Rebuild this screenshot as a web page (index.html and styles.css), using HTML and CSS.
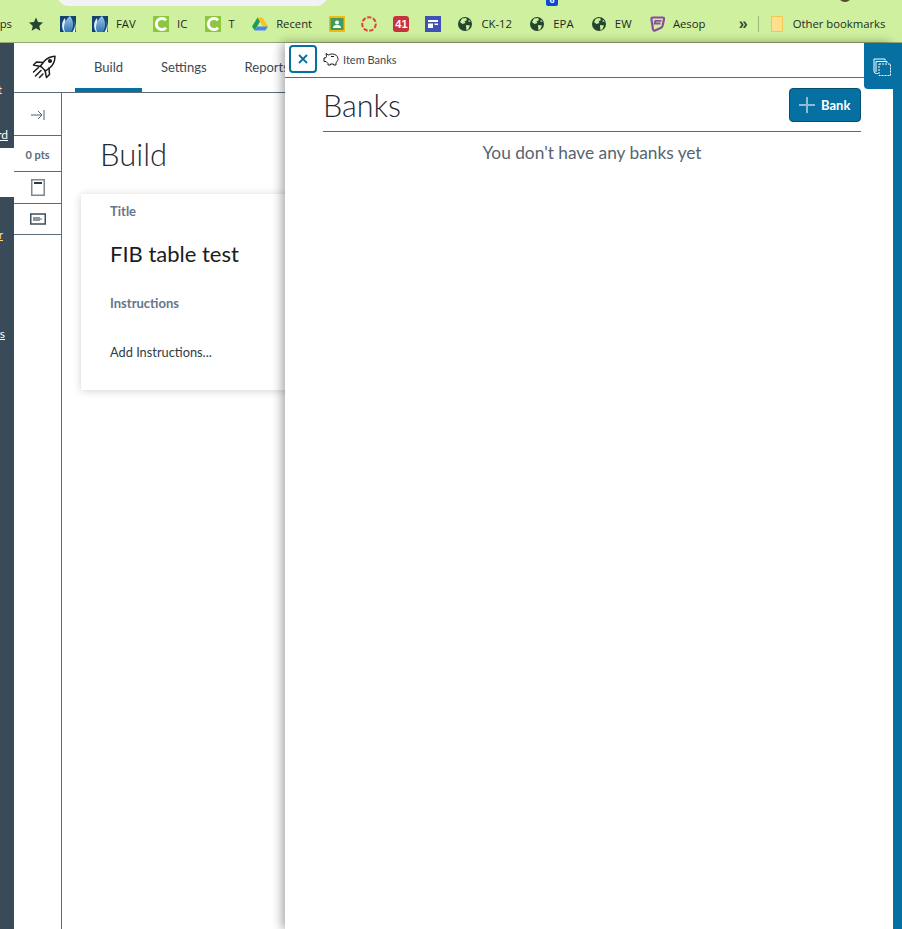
FILE: index.html
```html
<!DOCTYPE html>
<html lang="en">
<head>
<meta charset="utf-8">
<title>Item Banks</title>
<link rel="stylesheet" href="styles.css">
</head>
<body>
<svg class="defs" width="0" height="0" aria-hidden="true">
  <defs>
    <linearGradient id="petal" x1="0" y1="0" x2="0" y2="1"><stop offset="0" stop-color="#9cc8ec"/><stop offset="1" stop-color="#2f75b5"/></linearGradient>
    <symbol id="lotus" viewBox="0 0 16 16">
      <rect width="16" height="16" fill="#0f4470"/>
      <path d="M5 2C1.500 6 1 11 4 16H7Z" fill="#dfeaf4"/>
      <path d="M10 0C14 5 14 11 11 16H5C2.500 10 5 4 10 0Z" fill="url(#petal)"/>
      <path d="M13.500 3C16 8 15 12 12.500 16H15C16 12 16 7 13.500 3Z" fill="#eef4f9"/>
    </symbol>
    <symbol id="canvas-c" viewBox="0 0 16 16">
      <rect width="16" height="16" fill="#8dc63f"/>
      <path d="M13 4.200A5.600 5.600 0 1 0 13 11.800" fill="none" stroke="#fff" stroke-width="3"/>
    </symbol>
    <symbol id="globe" viewBox="0 0 16 16">
      <circle cx="8" cy="8" r="7" fill="#24452f"/>
      <path d="M5 2.500 9 2 10 4 7.500 5.600 8.500 7 5.400 8 3 6ZM9 9l4 .6-1.600 3.600-2 1ZM12 3.500l1.600 2.500-2.200-.5Z" fill="#cfef9e"/>
    </symbol>
  </defs>
</svg>

<div class="chrome-top">
  <span class="omnibox"></span>
  <span class="ext-badge">6</span>
  <span class="avatar"></span>
  <nav class="bookmarks">
    <span class="bm bm-apps">Apps</span>
    <span class="bm"><svg class="ico" viewBox="0 0 16 16"><path d="M8 1.500l2 4.600 5 .5-3.800 3.300 1.200 4.900L8 12.200l-4.400 2.600 1.200-4.900L1 6.600l5-.5Z" fill="#24452f"/></svg></span>
    <span class="bm"><svg class="ico"><use href="#lotus"/></svg></span>
    <span class="bm bm-l"><svg class="ico"><use href="#lotus"/></svg>FAV</span>
    <span class="bm bm-l"><svg class="ico"><use href="#canvas-c"/></svg>IC</span>
    <span class="bm bm-l"><svg class="ico"><use href="#canvas-c"/></svg>T</span>
    <span class="bm bm-l"><svg class="ico" viewBox="0 0 16 16"><path d="M5.500 1.500h5L16 10.500h-5Z" fill="#f7c325"/><path d="M5.500 1.500 0 10.500l2.700 4L8 5.800Z" fill="#1f9d57"/><path d="M2.700 14.500h10.600L16 10.500H5.200Z" fill="#4a86e8"/></svg>Recent</span>
    <span class="bm"><svg class="ico" viewBox="0 0 16 16"><rect width="16" height="16" rx="1" fill="#f5b90f"/><rect x="1.500" y="2" width="13" height="12" fill="#3f9a60"/><circle cx="8" cy="6.500" r="2" fill="#fff"/><path d="M4 12c0-2.400 1.800-3 4-3s4 .6 4 3Z" fill="#fff"/></svg></span>
    <span class="bm"><svg class="ico" viewBox="0 0 16 16"><circle cx="8" cy="8" r="6.800" fill="none" stroke="#e2403a" stroke-width="2" stroke-dasharray="4.300 1.700"/></svg></span>
    <span class="bm"><span class="tile-41">41</span></span>
    <span class="bm"><svg class="ico" viewBox="0 0 16 16"><rect width="16" height="16" fill="#3f51b5"/><path d="M3 4h10v2H3ZM3 7.500h5V12H3ZM9.500 7.500H13V9H9.500Z" fill="#fff"/></svg></span>
    <span class="bm bm-l"><svg class="ico"><use href="#globe"/></svg>CK-12</span>
    <span class="bm bm-l"><svg class="ico"><use href="#globe"/></svg>EPA</span>
    <span class="bm bm-l"><svg class="ico"><use href="#globe"/></svg>EW</span>
    <span class="bm bm-l"><svg class="ico" viewBox="0 0 16 16"><path d="M2.500 3.500Q2 1.500 4 1.500H13.500Q15.500 1.500 15 3.500L13.500 10Q13 11.500 11.500 12L6 14.500Q4.500 15 4 13.500Z" fill="none" stroke="#8a4c9d" stroke-width="2.200"/><path d="M12.500 4.800H6.300L5.700 7.500H11.500" fill="none" stroke="#8a4c9d" stroke-width="1.800"/></svg>Aesop</span>
    <span class="bm-more">»</span>
    <span class="bm-sep"></span>
    <span class="bm bm-other"><svg class="ico-folder" viewBox="0 0 12 16"><path d="M.5.500h11v15H.5Z" fill="#fee08f" stroke="#f2c94c"/></svg>Other bookmarks</span>
  </nav>
</div>

<div class="app">
  <aside class="global-nav">
    <a class="nav-link nav-first">Account</a>
    <a class="nav-link nav-dash">Dashboard</a>
    <div class="nav-active"></div>
    <a class="nav-link nav-tutor">Tutor</a>
    <a class="nav-link nav-last">Discussions</a>
  </aside>

  <div class="quiz">
    <header class="tabs">
      <span class="rocket">
        <svg viewBox="0 0 24 24" width="24" height="24" fill="none" stroke="#1c1c1c" stroke-width="1.500" stroke-linejoin="round" stroke-linecap="round">
          <path d="M23 1.200C18 1.500 14.500 3.500 12 6.500L8.500 11l5 5 4.600-3.500c3-2.500 4.800-6 4.900-11.300Z"/>
          <path d="M11 7.500 4.500 7 1.500 10l7 1.500M17 13l.5 6.500-3 3L13 15.500"/>
          <circle cx="18" cy="6" r="1.300" fill="#1c1c1c"/>
          <path d="M1.500 17 6.500 12.500M3.500 21 9 15.500M7.500 22.500 11 19"/>
        </svg>
      </span>
      <a class="tab tab-active">Build</a>
      <a class="tab">Settings</a>
      <a class="tab">Reports</a>
    </header>

    <div class="workspace">
      <div class="strip">
        <div class="strip-row strip-collapse">
          <svg viewBox="0 0 14 12" width="14" height="12" fill="none" stroke="#56646f" stroke-width="1"><path d="M0 6H11M7 2l4 4-4 4M13 1v10"/></svg>
        </div>
        <div class="strip-row strip-pts">0 pts</div>
        <div class="strip-row strip-page">
          <svg viewBox="0 0 14 17" width="14" height="17"><rect x=".75" y=".75" width="12.500" height="15.500" fill="#fff" stroke="#7d8791" stroke-width="1.500"/><rect x="3" y="3" width="8" height="2" fill="#2d3b45"/></svg>
        </div>
        <div class="strip-row strip-card">
          <svg viewBox="0 0 16 12" width="16" height="12"><rect x=".75" y="1" width="14.500" height="10" fill="#fff" stroke="#3f4d58" stroke-width="1.500"/><path d="M3 4h7v1.200h2v1.600h-2V8H3Z" fill="#8b96a0"/></svg>
        </div>
      </div>

      <main class="build">
        <h1 class="build-title">Build</h1>
        <section class="card">
          <h2 class="label label-title">Title</h2>
          <div class="quiz-name">FIB table test</div>
          <h2 class="label label-instr">Instructions</h2>
          <div class="add-instr">Add Instructions...</div>
        </section>
      </main>
    </div>
  </div>
</div>

<aside class="tray">
  <header class="tray-head">
    <button class="close" aria-label="Close">
      <svg viewBox="0 0 10 10" width="10" height="10" fill="none" stroke="#0770a3" stroke-width="1.800"><path d="M1 1l8 8M9 1l-8 8"/></svg>
    </button>
    <svg class="piggy" viewBox="0 0 16 14" width="16" height="14" fill="none" stroke="#1c1c1c" stroke-width="1" stroke-linejoin="round"><path d="M15 6.500C14.500 3.500 12 2 9.500 2 8 2 6.500 2.300 5.500 3L3 1.500 3.500 4.500 2.500 6H1V9.500H3L5 11.500V13H7.500V12H10.500V13H13V10.500C14.300 9.500 15.200 8 15 6.500Z"/><path d="M8 4.500H11"/></svg>
    <span class="crumb">Item Banks</span>
  </header>
  <div class="tray-body">
    <div class="banks-head">
      <h1 class="banks-title">Banks</h1>
      <button class="add-bank">
        <svg viewBox="0 0 18 18" width="18" height="18" fill="none" stroke="#8fbcd4" stroke-width="2"><path d="M9 1v16M1 9h16"/></svg>
        <span>Bank</span>
      </button>
    </div>
    <p class="empty">You don't have any banks yet</p>
  </div>
</aside>

<div class="tray-edge"></div>
<button class="tray-tab" aria-label="Copy">
  <svg viewBox="0 0 18 18" width="18" height="18" fill="none" stroke="#fff" stroke-width="1"><path d="M5 15.500H3.500A2.500 2.500 0 0 1 1 13V1h11v1.500"/><path d="M3 14V3.500h11V5"/><path d="M6 6h11.500v11.500H6Z" stroke-dasharray="2 1"/></svg>
</button>
</body>
</html>
```

FILE: styles.css
```css
* { box-sizing: border-box; }

html, body {
  margin: 0;
  height: 100%;
  overflow: hidden;
}

body {
  display: flex;
  flex-direction: column;
  background: #fff;
  color: #2d3b45;
  font-family: "Lato", "Liberation Sans", sans-serif;
}

.defs { position: absolute; }

/* browser chrome */
.chrome-top {
  position: relative;
  flex: none;
  height: 43px;
  background: #cff09e;
  border-bottom: 1px solid #94a97a;
  overflow: hidden;
}

.omnibox {
  position: absolute;
  left: 57px;
  top: -20px;
  width: 271px;
  height: 26px;
  background: #f1f3f4;
  border-radius: 12px;
}

.ext-badge {
  position: absolute;
  left: 546px;
  top: -6px;
  width: 12px;
  height: 12px;
  background: #0b47d1;
  border-radius: 2px;
  color: #fff;
  font: 700 9px/12px "Liberation Sans", sans-serif;
  text-align: center;
}

.avatar {
  position: absolute;
  left: 838px;
  top: -12px;
  width: 14px;
  height: 14px;
  border-radius: 50%;
  background: #5b4038;
}

.bookmarks {
  display: flex;
  align-items: center;
  gap: 16px;
  height: 42px;
  padding: 5px 0 0 0;
  margin-left: -16px;
  font: 11.3px/16px "Open Sans", "Noto Sans", sans-serif;
  color: #1d2a1f;
  white-space: nowrap;
}

.bm {
  display: flex;
  align-items: center;
  gap: 8px;
  flex: none;
}

.bm-l { padding-right: 1.3px; }
.bm-apps { width: 28px; justify-content: flex-end; }
.bm-other { gap: 10px; }

.ico {
  display: block;
  width: 16px;
  height: 16px;
  flex: none;
}

.ico-folder {
  display: block;
  width: 12px;
  height: 16px;
}

.tile-41 {
  display: block;
  width: 16px;
  height: 16px;
  background: #c8323f;
  border-radius: 3px;
  color: #fff;
  font: 700 11px/16px "Liberation Sans", sans-serif;
  text-align: center;
}

.bm-more {
  margin-left: 16px;
  font: 700 16px/16px "Liberation Sans", sans-serif;
  color: #2f4a33;
}

.bm-sep {
  width: 1px;
  height: 16px;
  background: #9db381;
  margin-left: -6px;
  margin-right: -4px;
}

/* app */
.app {
  flex: 1;
  display: flex;
  min-height: 0;
}

.global-nav {
  flex: none;
  width: 14px;
  background: #394b58;
  display: flex;
  flex-direction: column;
  align-items: flex-end;
  overflow: hidden;
  font-size: 12px;
}

.nav-link {
  display: block;
  flex: none;
  margin-right: 6px;
  color: #fff;
  text-decoration: underline;
  white-space: nowrap;
  line-height: 14px;
}

.nav-first { margin-top: 40px; margin-right: 12px; text-decoration: none; }
.nav-dash { margin-top: 31px; }
.nav-active {
  flex: none;
  align-self: stretch;
  height: 49px;
  margin-top: 6px;
  background: #fff;
}
.nav-tutor { margin-top: 31px; margin-right: 11px; color: #fbdc8a; }
.nav-last { margin-top: 85px; margin-right: 9px; }

.quiz {
  flex: 1;
  min-width: 0;
  display: flex;
  flex-direction: column;
}

.tabs {
  flex: none;
  height: 50px;
  display: flex;
  align-items: stretch;
  border-bottom: 1px solid #5d6b77;
  font-size: 13px;
}

.rocket {
  display: flex;
  align-items: center;
  width: 61px;
  padding: 0 0 1px 18px;
}

.tab {
  display: flex;
  align-items: center;
  padding: 2px 19px 0;
  color: #3d4a54;
  border-bottom: 4px solid transparent;
  white-space: nowrap;
}

.tab-active { border-bottom-color: #0770a3; }

.workspace {
  flex: 1;
  display: flex;
  min-height: 0;
}

.strip {
  flex: none;
  width: 48px;
  border-right: 1px solid #5d6b77;
}

.strip-row {
  display: flex;
  align-items: center;
  justify-content: center;
  border-bottom: 1px solid #5d6b77;
}

.strip-collapse { height: 43px; padding-top: 1px; }
.strip-pts { height: 36px; padding-top: 2px; font-size: 11px; font-weight: 700; color: #5d6b77; }
.strip-page { height: 32px; }
.strip-card { height: 31px; }

.build {
  flex: 1;
  min-width: 0;
  padding-left: 19px;
}

.build-title {
  margin: 40px 0 0 19px;
  font-size: 31px;
  line-height: 42px;
  font-weight: 300;
  color: #1f2a33;
}

.card {
  width: 260px;
  height: 196px;
  margin-top: 19px;
  padding: 9px 0 0 29px;
  background: #fff;
  box-shadow: 0 1px 8px rgba(0, 0, 0, .18);
}

.label {
  margin: 0;
  font-size: 13px;
  line-height: 17px;
  font-weight: 700;
  color: #66758a;
}

.quiz-name {
  margin-top: 19px;
  font-size: 22px;
  line-height: 30px;
  color: #1c1c1c;
}

.label-instr { margin-top: 26px; }

.add-instr {
  margin-top: 32px;
  font-size: 12.8px;
  line-height: 17px;
  color: #2d3b45;
}

/* tray overlay */
.tray {
  position: absolute;
  left: 285px;
  top: 43px;
  bottom: 0;
  width: 608px;
  background: #fff;
  box-shadow: -3px 0 10px rgba(0, 0, 0, .35);
}

.tray-head {
  display: flex;
  align-items: center;
  height: 35px;
  padding: 0 0 3px 4px;
  border-bottom: 1px solid #5d6b77;
}

.close {
  display: flex;
  align-items: center;
  justify-content: center;
  width: 28px;
  height: 28px;
  padding: 0;
  background: #fff;
  border: 2px solid #0770a3;
  border-radius: 4px;
}

.piggy { margin-left: 6px; }

.crumb {
  margin: 2px 0 0 4px;
  font-size: 11px;
  color: #3d4a54;
}

.tray-body { padding: 0 32px 0 38px; }

.banks-head {
  display: flex;
  align-items: center;
  justify-content: space-between;
  height: 54px;
  border-bottom: 1px solid #5d6b77;
}

.banks-title {
  margin: 0;
  font-size: 30.500px;
  line-height: 36px;
  font-weight: 300;
  color: #1f2a33;
}

.add-bank {
  display: flex;
  align-items: center;
  gap: 5px;
  width: 72px;
  height: 34px;
  padding: 0 0 0 8px;
  background: #0770a3;
  border: 1px solid #04506f;
  border-radius: 4px;
  color: #fff;
  font: 700 13px "Lato", sans-serif;
}

.empty {
  margin: 10px 0 0;
  text-align: center;
  font-size: 17.300px;
  line-height: 22px;
  color: #56646f;
}

.tray-edge {
  position: absolute;
  left: 893px;
  top: 89px;
  right: 0;
  bottom: 0;
  background: #0770a3;
}

.tray-tab {
  position: absolute;
  left: 864px;
  top: 43px;
  right: 0;
  height: 46px;
  padding: 2px 0 0 9px;
  display: flex;
  align-items: center;
  justify-content: flex-start;
  background: #0770a3;
  border: 0;
  border-radius: 0 0 0 4px;
}
```
